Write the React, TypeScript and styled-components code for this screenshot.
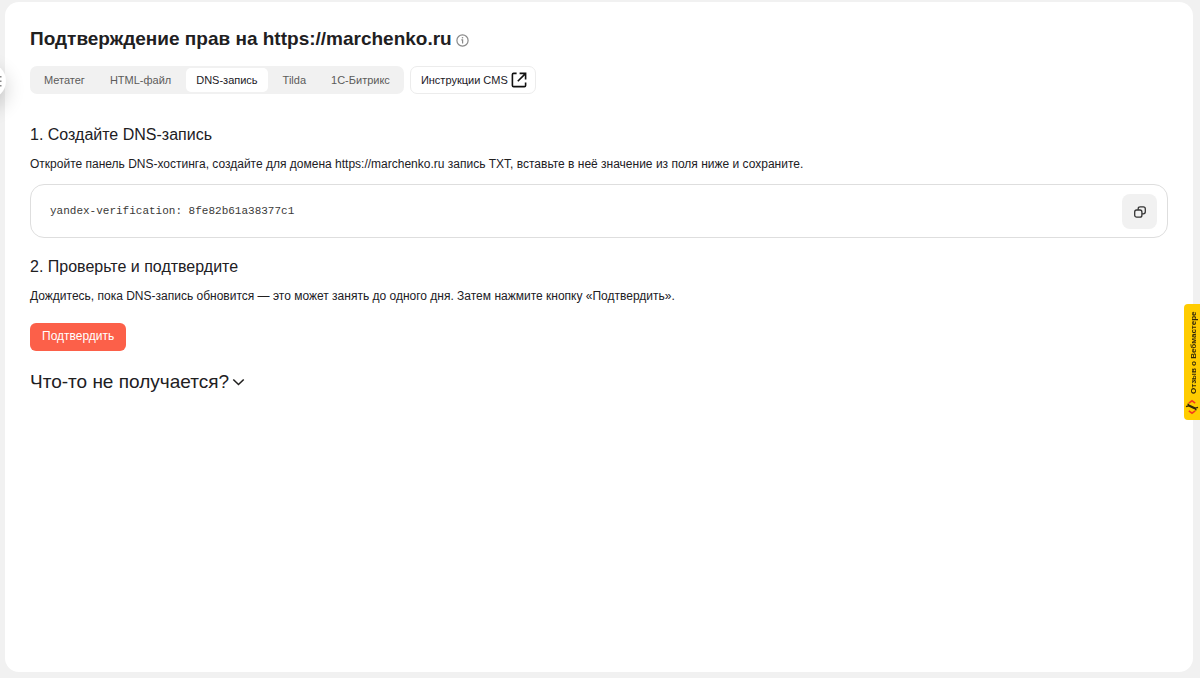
import React, { useState } from "react";
import styled, { createGlobalStyle } from "styled-components";

const GlobalStyle = createGlobalStyle`
  *, *::before, *::after { box-sizing: border-box; }
  body {
    margin: 0;
    background: #f1f1f1;
    color: #21201f;
    font-family: "Liberation Sans", Arial, sans-serif;
    font-size: 12px;
    line-height: 16px;
    overflow-x: hidden;
  }
  button { font: inherit; color: inherit; border: 0; padding: 0; background: none; cursor: pointer; }
  h1, h2, p { margin: 0; }
`;

const Page = styled.div`
  display: flex;
  min-height: 100vh;
  padding: 2px 7px 6px 5px;
`;

const Card = styled.main`
  flex: 1;
  min-width: 0;
  padding: 25px 25px 24px;
  background: #fff;
  border-radius: 14px;
`;

const TitleRow = styled.header`
  display: flex;
  align-items: center;
  gap: 4px;
`;

const Title = styled.h1`
  font-size: 19px;
  line-height: 24px;
  font-weight: 700;
`;

const InfoButton = styled.button`
  display: flex;
  padding-top: 3px;
  color: #8a8a8a;
`;

const Toolbar = styled.div`
  display: flex;
  flex-wrap: wrap;
  gap: 6px;
  margin-top: 15px;
`;

const Tabs = styled.div`
  display: flex;
  gap: 5px;
  padding: 2px 4px;
  background: #f1f1f1;
  border-radius: 7px;
`;

const Tab = styled.button<{ $active: boolean }>`
  height: 24px;
  padding: 0 10px;
  border-radius: 5px;
  font-size: 11px;
  line-height: 24px;
  white-space: nowrap;
  color: ${(p) => (p.$active ? "#21201f" : "#5c5b5a")};
  background: ${(p) => (p.$active ? "#fff" : "transparent")};
`;

const CmsLink = styled.a`
  display: flex;
  align-items: center;
  gap: 3px;
  height: 28px;
  padding: 0 8px 0 10px;
  border: 1px solid #ececec;
  border-radius: 7px;
  font-size: 11px;
  color: #21201f;
  text-decoration: none;
`;

const Step = styled.section`
  margin-top: 19px;
`;

const Steps = styled.div`
  padding-top: 12px;
`;

const StepTitle = styled.h2`
  font-size: 16px;
  line-height: 20px;
  font-weight: 400;
`;

const Text = styled.p`
  margin-top: 11px;
`;

const CodeBox = styled.div`
  display: flex;
  align-items: center;
  justify-content: space-between;
  margin-top: 12px;
  padding: 9px 10px 8px 19px;
  border: 1px solid #dedede;
  border-radius: 14px;
`;

const Code = styled.code`
  padding-bottom: 2px;
  font-family: "Liberation Mono", monospace;
  font-size: 11px;
  line-height: 16px;
  color: #3a3938;
`;

const CopyButton = styled.button`
  display: flex;
  align-items: center;
  justify-content: center;
  width: 35px;
  height: 35px;
  border-radius: 8px;
  background: #f1f1f1;
`;

const ConfirmButton = styled.button`
  display: block;
  height: 28px;
  margin-top: 19px;
  padding: 0 12px 2px;
  border-radius: 6px;
  background: #fc6049;
  color: #fff;
`;

const HelpToggle = styled.button`
  display: flex;
  align-items: center;
  gap: 3px;
  margin-top: 19px;
  font-size: 19px;
  line-height: 24px;
`;

const MenuHandle = styled.button`
  position: fixed;
  top: 63px;
  left: -30px;
  display: flex;
  align-items: center;
  justify-content: flex-end;
  width: 36px;
  height: 36px;
  border-radius: 50%;
  background: #fff;
  box-shadow: 0 8px 20px rgba(0, 0, 0, 0.2);
`;

const Feedback = styled.button`
  position: fixed;
  top: 304px;
  right: 0;
  display: flex;
  align-items: center;
  gap: 5px;
  width: 16px;
  height: 116px;
  padding: 5px 0;
  border-radius: 0 4px 4px 0;
  background: #ffcc00;
  color: #33280a;
  font-size: 8px;
  line-height: 12px;
  font-weight: 700;
  white-space: nowrap;
  writing-mode: vertical-rl;
  transform: rotate(180deg);
`;

const FeedbackLabel = styled.span`
  padding-right: 4px;
`;

const InfoIcon = () => (
  <svg width="13" height="13" viewBox="0 0 13 13" fill="none" aria-hidden="true">
    <circle cx="6.5" cy="6.5" r="5.6" stroke="currentColor" strokeWidth="1.2" />
    <path d="M5.3 5.9h1.3v3.6" stroke="currentColor" strokeWidth="1.2" />
    <circle cx="6.5" cy="3.8" r=".8" fill="currentColor" />
  </svg>
);

const ExternalIcon = () => (
  <svg width="16" height="16" viewBox="0 0 16 16" fill="none" stroke="#111" strokeWidth="1.6" aria-hidden="true">
    <path d="M5.6 1.4H2.6Q1.4 1.4 1.4 2.6V13.4Q1.4 14.6 2.6 14.6H13.4Q14.6 14.6 14.6 13.4V10.4" />
    <path d="M8.6 1.4h6V7.4M14.4 1.6 6.8 9.2" />
  </svg>
);

const CopyIcon = () => (
  <svg width="12" height="12" viewBox="0 0 12 12" fill="none" stroke="#333" strokeWidth="1.3" aria-hidden="true">
    <rect x=".7" y="4" width="7.2" height="7.2" rx="2" />
    <path d="M4.2 3.8V2.8Q4.2.8 6.2.8H9.3Q11.3.8 11.3 2.8V5.8Q11.3 7.8 9.3 7.8H8" />
  </svg>
);

const ChevronIcon = () => (
  <svg width="13" height="9" viewBox="0 0 13 9" fill="none" aria-hidden="true">
    <path d="m1.3 1.5 5.2 5 5.2-5" stroke="#21201f" strokeWidth="1.6" />
  </svg>
);

const DotsIcon = () => (
  <svg width="6" height="14" viewBox="0 0 6 14" fill="#888" aria-hidden="true">
    <path d="M0 2h1.5v1.5H0zM0 6.5h1.5V8H0zM0 11h1.5v1.5H0z" />
  </svg>
);

const WrenchIcon = () => (
  <svg width="14" height="16" viewBox="0 0 14 16" fill="none" aria-hidden="true">
    <path d="M3.8 4.2 7 1.8l3.2 2.4M3.8 11.8 7 14.2l3.2-2.4" stroke="#f33b1d" strokeWidth="1.5" />
    <path d="M3.8 6.6 10.2 9.4" stroke="#33280a" strokeWidth="2.2" />
    <path d="M3 4.6 3.6 6.8 1 7.6M11 11.4 10.4 9.2 13 8.4" stroke="#33280a" strokeWidth="1.5" />
  </svg>
);

const METHODS = ["Метатег", "HTML-файл", "DNS-запись", "Tilda", "1С-Битрикс"];

export default function App() {
  const [method, setMethod] = useState("DNS-запись");

  return (
    <>
      <GlobalStyle />
      <Page>
        <Card>
          <TitleRow>
            <Title>Подтверждение прав на https://marchenko.ru</Title>
            <InfoButton type="button" aria-label="Информация"><InfoIcon /></InfoButton>
          </TitleRow>
          <Toolbar>
            <Tabs role="tablist">
              {METHODS.map((name) => (
                <Tab
                  key={name}
                  type="button"
                  role="tab"
                  aria-selected={name === method}
                  $active={name === method}
                  onClick={() => setMethod(name)}
                >
                  {name}
                </Tab>
              ))}
            </Tabs>
            <CmsLink href="#cms">Инструкции CMS<ExternalIcon /></CmsLink>
          </Toolbar>
          <Steps>
            <Step>
              <StepTitle>1. Создайте DNS-запись</StepTitle>
              <Text>
                Откройте панель DNS-хостинга, создайте для домена https://marchenko.ru запись TXT, вставьте в неё значение из поля ниже и сохраните.
              </Text>
              <CodeBox>
                <Code>yandex-verification: 8fe82b61a38377c1</Code>
                <CopyButton type="button" aria-label="Скопировать"><CopyIcon /></CopyButton>
              </CodeBox>
            </Step>
            <Step>
              <StepTitle>2. Проверьте и подтвердите</StepTitle>
              <Text>
                Дождитесь, пока DNS-запись обновится — это может занять до одного дня. Затем нажмите кнопку «Подтвердить».
              </Text>
              <ConfirmButton type="button">Подтвердить</ConfirmButton>
            </Step>
          </Steps>
          <HelpToggle type="button" aria-expanded="false">Что-то не получается?<ChevronIcon /></HelpToggle>
        </Card>
      </Page>
      <MenuHandle type="button" aria-label="Меню"><DotsIcon /></MenuHandle>
      <Feedback type="button"><WrenchIcon /><FeedbackLabel>Отзыв о Вебмастере</FeedbackLabel></Feedback>
    </>
  );
}
